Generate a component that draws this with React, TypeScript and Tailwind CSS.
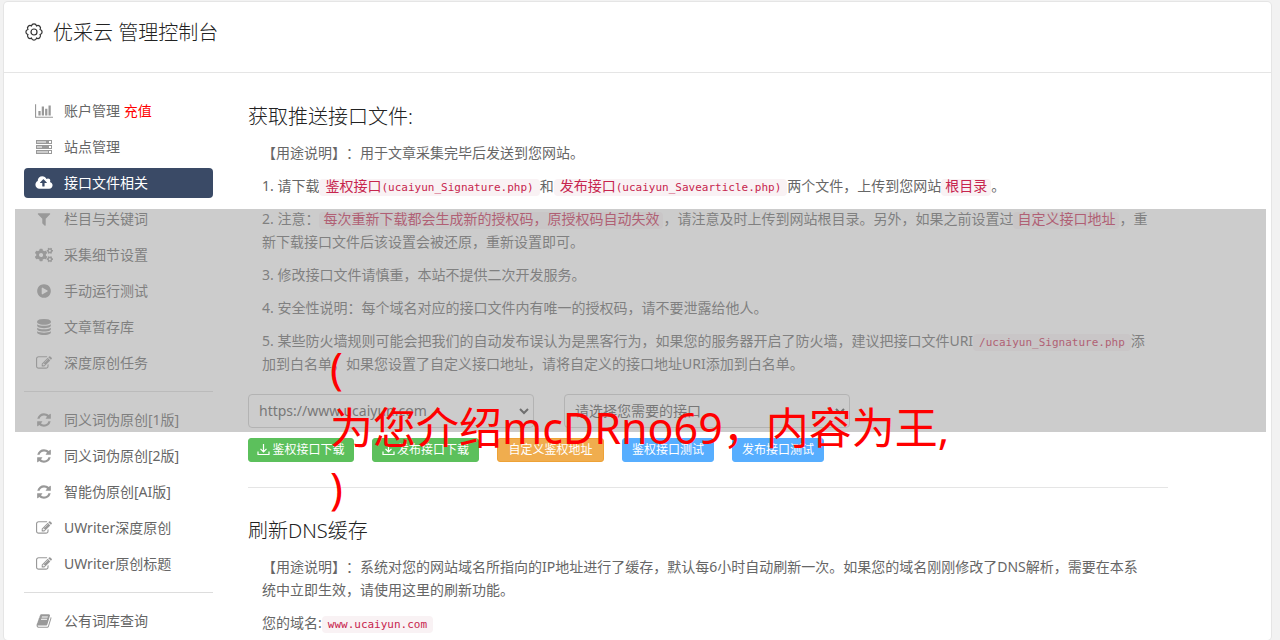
import { FaCogs } from "react-icons/fa";
import type { ReactNode } from "react";

const BODY = "font-['Noto_Sans','Noto_Sans_CJK_SC',sans-serif] [text-spacing-trim:space-all]";

function Glyph({ d, box = "0 0 1792 1792", wide = false }: { d: string; box?: string; wide?: boolean }) {
  return (
    <svg aria-hidden="true" viewBox={box} fill="currentColor" fillRule="evenodd" className={wide ? "h-4 w-[18px]" : "h-4 w-4"}>
      <path d={d} />
    </svg>
  );
}

const PATHS = {
  chart: "M640 896v512h-256v-512h256zM1024 384v1024h-256v-1024h256zM2048 1536v128h-2048v-1536h128v1408h1920zM1408 640v768h-256v-768h256zM1792 256v1152h-256v-1152h256z",
  server:
    "M0 112h1792v448h-1792zM112 280v112h1008v-112zM1456 224v224h224v-224zM0 672h1792v448h-1792zM112 840v112h560v-112zM1456 784v224h224v-224zM0 1232h1792v448h-1792zM112 1400v112h1232v-112zM1456 1344v224h224v-224z",
  cloud:
    "M1280 864q0-14-9-23l-352-352q-9-9-23-9t-23 9l-351 351q-10 12-10 24 0 14 9 23t23 9h224v352q0 13 9.5 22.5t22.5 9.5h192q13 0 22.5-9.5t9.5-22.5v-352h224q13 0 22.5-9.5t9.5-22.5zm640 288q0 159-112.5 271.5t-271.5 112.5h-1088q-185 0-316.5-131.5t-131.5-316.5q0-130 70-240t188-165q-2-30-2-43 0-212 150-362t362-150q156 0 285.5 87t188.5 231q71-62 166-62 106 0 181 75t75 181q0 76-41 138 130 31 213.5 135.5t83.5 238.5z",
  filter:
    "M1595 295q17 41-14 70l-493 493v742q0 42-39 59-13 5-25 5-27 0-45-19l-256-256q-19-19-19-45v-486l-493-493q-31-29-14-70 17-39 59-39h1280q42 0 59 39z",
  play: "M896 128q209 0 385.5 103t279.5 279.5 103 385.5-103 385.5-279.5 279.5-385.5 103-385.5-103-279.5-279.5-103-385.5 103-385.5 279.5-279.5 385.5-103zm384 823q32-18 32-55t-32-55l-544-320q-31-19-64-1-32 19-32 56v640q0 37 32 56 16 8 32 8 17 0 32-9z",
  database:
    "M896 768q237 0 443-43t325-127v170q0 69-103 128t-280 93.5-385 34.5-385-34.5-280-93.5-103-128v-170q119 84 325 127t443 43zm0 768q237 0 443-43t325-127v170q0 69-103 128t-280 93.5-385 34.5-385-34.5-280-93.5-103-128v-170q119 84 325 127t443 43zm0-384q237 0 443-43t325-127v170q0 69-103 128t-280 93.5-385 34.5-385-34.5-280-93.5-103-128v-170q119 84 325 127t443 43zm0-1152q208 0 385 34.5t280 93.5 103 128v128q0 69-103 128t-280 93.5-385 34.5-385-34.5-280-93.5-103-128v-128q0-69 103-128t280-93.5 385-34.5z",
  edit: "M888 1184l116-116-152-152-116 116v56h96v96h56zm440-720q-16-16-33 1l-350 350q-17 17-1 33t33-1l350-350q17-17 1-33zm80 594v190q0 119-84.5 203.5t-203.5 84.5h-832q-119 0-203.5-84.5t-84.5-203.5v-832q0-119 84.5-203.5t203.5-84.5h832q63 0 117 25 15 7 18 23 3 17-9 29l-49 49q-14 14-32 8-23-6-45-6h-832q-66 0-113 47t-47 113v832q0 66 47 113t113 47h832q66 0 113-47t47-113v-126q0-13 9-22l64-64q15-15 35-7t20 29zm-96-738l288 288-672 672h-288v-288zm444 132l-92 92-288-288 92-92q28-28 68-28t68 28l152 152q28 28 28 68t-28 68z",
  refresh:
    "M1639 1056q0 5-1 7-64 268-268 434.5t-478 166.5q-146 0-282.5-55t-243.5-157l-129 129q-19 19-45 19t-45-19-19-45v-448q0-26 19-45t45-19h448q26 0 45 19t19 45-19 45l-137 137q71 66 161 102t187 36q134 0 250-65t186-179q11-17 53-117 8-23 30-23h192q13 0 22.5 9.5t9.5 22.5zm25-800v448q0 26-19 45t-45 19h-448q-26 0-45-19t-19-45 19-45l138-138q-148-137-349-137-134 0-250 65t-186 179q-11 17-53 117-8 23-30 23h-199q-13 0-22.5-9.5t-9.5-22.5v-7q65-268 270-434.5t480-166.5q146 0 284 55.5t245 156.5l130-129q19-19 45-19t45 19 19 45z",
  book: "M1703 478q40 57 18 129l-275 906q-19 64-76.5 107.5t-122.5 43.5h-923q-77 0-148.5-53.5t-99.5-131.5q-24-67-2-127 0-4 3-27t4-37q1-8-3-21.5t-3-19.5q2-11 8-21t16.5-23.5 16.5-23.5q23-38 45-91.5t30-91.5q3-10 .5-30t-.5-28q3-11 17-28t17-23q21-36 42-92t25-90q1-9-2.5-32t.5-28q4-13 22-30.5t22-22.5q19-26 42.5-84.5t27.5-96.5q1-8-3-25.5t-2-26.5q2-8 9-18t18-23 17-21q8-12 16.5-30.5t15-35 16-36 19.5-32 26.5-23.5 36-11.5 47.5 5.5l-1 3q38-9 51-9h761q74 0 114 56t18 130l-274 906q-36 119-71.5 153.5t-128.5 34.5h-869q-27 0-38 15-11 16-1 43 24 70 144 70h923q29 0 56-15.5t35-41.5l300-987q7-22 5-57 38 15 59 43zm-1064 2q-4 13 2 22.5t20 9.5h608q13 0 25.5-9.5t16.5-22.5l21-64q4-13-2-22.5t-20-9.5h-608q-13 0-25.5 9.5t-16.5 22.5zm-83 256q-4 13 2 22.5t20 9.5h608q13 0 25.5-9.5t16.5-22.5l21-64q4-13-2-22.5t-20-9.5h-608q-13 0-25.5 9.5t-16.5 22.5z",
};

type Item = { label: string; icon: ReactNode; extra?: string; active?: boolean };

const refresh = <Glyph d={PATHS.refresh} />;
const edit = <Glyph d={PATHS.edit} />;

const GROUPS: Item[][] = [
  [
    { label: "账户管理", extra: "充值", icon: <Glyph d={PATHS.chart} box="0 0 2048 1792" wide /> },
    { label: "站点管理", icon: <Glyph d={PATHS.server} /> },
    { label: "接口文件相关", active: true, icon: <Glyph d={PATHS.cloud} box="0 0 1920 1792" wide /> },
    { label: "栏目与关键词", icon: <Glyph d={PATHS.filter} /> },
    { label: "采集细节设置", icon: <FaCogs className="h-4 w-[18px]" /> },
    { label: "手动运行测试", icon: <Glyph d={PATHS.play} /> },
    { label: "文章暂存库", icon: <Glyph d={PATHS.database} /> },
    { label: "深度原创任务", icon: edit },
  ],
  [
    { label: "同义词伪原创[1版]", icon: refresh },
    { label: "同义词伪原创[2版]", icon: refresh },
    { label: "智能伪原创[AI版]", icon: refresh },
    { label: "UWriter深度原创", icon: edit },
    { label: "UWriter原创标题", icon: edit },
  ],
  [{ label: "公有词库查询", icon: <Glyph d={PATHS.book} /> }],
];

function NavItem({ item }: { item: Item }) {
  return (
    <li>
      <a
        href="#"
        className={
          item.active
            ? "flex h-[30px] items-center rounded bg-[#3a4a66] pl-[10px] text-white"
            : "flex h-[30px] items-center rounded pl-[10px] text-[#666]"
        }
      >
        <span className={item.active ? "flex w-5 justify-center" : "flex w-5 justify-center text-[#999]"}>{item.icon}</span>
        <span className="ml-[10px]">
          {item.label}
          {item.extra && <span className="text-[#f00]"> {item.extra}</span>}
        </span>
      </a>
    </li>
  );
}

const CODE = "rounded bg-[#f9f2f4] py-[2px] font-['DejaVu_Sans_Mono','Noto_Sans_CJK_SC',monospace] text-[11px] leading-none text-[#c7254e]";

function Code({ cjk, latin }: { cjk?: string; latin?: string }) {
  return (
    <code className={latin ? `${CODE} px-[6px]` : `${CODE} px-1`}>
      {cjk && <span className="text-sm leading-none">{cjk}</span>}
      {latin}
    </code>
  );
}

function DownloadIcon() {
  return (
    <svg aria-hidden="true" viewBox="0 0 13 12" className="mr-[2px] h-3 w-[13px]" fill="none" stroke="currentColor" strokeWidth="1.2">
      <path d="M1 7.500v3h11v-3M6.500 0v7.500M3.500 4.800l3 3l3-3" />
    </svg>
  );
}

function Picker({ id, label, text }: { id: string; label: string; text: string }) {
  return (
    <div className="relative w-[286px]">
      <label htmlFor={id} className="sr-only">
        {label}
      </label>
      <select id={id} className="h-[34px] w-full appearance-none rounded border border-[#ccc] bg-white pr-6 pl-[10px] text-sm text-[#555]">
        <option>{text}</option>
      </select>
      <svg aria-hidden="true" viewBox="0 0 10 7" className="pointer-events-none absolute top-[14px] right-[5px] h-[7px] w-[10px]" fill="none" stroke="#444" strokeWidth="2">
        <path d="M1 1l4 4l4-4" />
      </svg>
    </div>
  );
}

const BTN = "flex h-6 items-center justify-center rounded-[3px] border text-xs text-white";

export default function App() {
  return (
    <div className={`${BODY} relative h-screen overflow-hidden bg-[#f2f2f2] pt-[2px] pr-[9px] pl-1 text-sm text-[#666]`}>
      <div className="min-h-full rounded bg-white shadow-[0_0_0_1px_#e5e5e5]">
        <header className="flex h-[71px] items-start border-b border-[#e5e5e5] pt-[17px] pl-[21px]">
          <svg aria-hidden="true" viewBox="0 0 18 18" className="mt-1 h-[18px] w-[18px]" fill="none" stroke="#333" strokeWidth="1.2">
            <path d="M15.100 6.470a2.600 2.600 0 0 1 0 5.060a2.600 2.600 0 0 1-3.570 3.570a2.600 2.600 0 0 1-5.060 0a2.600 2.600 0 0 1-3.570-3.570a2.600 2.600 0 0 1 0-5.060a2.600 2.600 0 0 1 3.570-3.570a2.600 2.600 0 0 1 5.060 0a2.600 2.600 0 0 1 3.570 3.570z" />
            <circle cx="9" cy="9" r="3" />
          </svg>
          <h1 className="ml-[10px] text-xl leading-7 font-light text-[#222]">优采云 管理控制台</h1>
        </header>

        <div className="flex items-start px-5 pt-[23px]">
          <nav className="w-[189px] shrink-0">
            {GROUPS.map((group, i) => (
              <ul key={i} className={i > 0 ? "mt-[13px] flex flex-col gap-[6px] border-t border-[#ddd] pt-[13px]" : "flex flex-col gap-[6px]"}>
                {group.map((item) => (
                  <NavItem key={item.label} item={item} />
                ))}
              </ul>
            ))}
          </nav>

          <main className="mr-[83px] ml-[35px] flex-1">
            <section className="border-b border-[#e5e5e5] pb-[25px]">
              <h2 className="pt-[7px] text-xl leading-7 font-light text-[#222]">获取推送接口文件:</h2>
              <div className="mt-[10px] flex flex-col gap-[10px] pr-[18px] pl-[14px] leading-[23px]">
                <p>【用途说明】：用于文章采集完毕后发送到您网站。</p>
                <p>
                  1. 请下载
                  <Code cjk="鉴权接口" latin="(ucaiyun_Signature.php)" />和<Code cjk="发布接口" latin="(ucaiyun_Savearticle.php)" />
                  两个文件，上传到您网站
                  <Code cjk="根目录" />。
                </p>
                <p>
                  2. 注意：
                  <Code cjk="每次重新下载都会生成新的授权码，原授权码自动失效" />
                  ，请注意及时上传到网站根目录。另外，如果之前设置过
                  <Code cjk="自定义接口地址" />
                  ，重新下载接口文件后该设置会被还原，重新设置即可。
                </p>
                <p>3. 修改接口文件请慎重，本站不提供二次开发服务。</p>
                <p>4. 安全性说明：每个域名对应的接口文件内有唯一的授权码，请不要泄露给他人。</p>
                <p>
                  5. 某些防火墙规则可能会把我们的自动发布误认为是黑客行为，如果您的服务器开启了防火墙，建议把接口文件URI
                  <Code latin="/ucaiyun_Signature.php" />
                  添加到白名单，如果您设置了自定义接口地址，请将自定义的接口地址URI添加到白名单。
                </p>
              </div>
              <div className="mt-[19px] flex gap-[30px]">
                <Picker id="site" label="站点" text="https://www.ucaiyun.com" />
                <Picker id="api" label="接口" text="请选择您需要的接口" />
              </div>
              <div className="mt-[10px] flex gap-[18px]">
                <button type="button" className={`${BTN} w-[106px] border-[#5cc05c] bg-[#5cc05c]`}>
                  <DownloadIcon />
                  鉴权接口下载
                </button>
                <button type="button" className={`${BTN} w-[107px] border-[#5cc05c] bg-[#5cc05c]`}>
                  <DownloadIcon />
                  发布接口下载
                </button>
                <button type="button" className={`${BTN} w-[107px] border-[#eea236] bg-[#f0ad4e]`}>
                  自定义鉴权地址
                </button>
                <button type="button" className={`${BTN} w-[92px] border-[#57aeff] bg-[#57aeff]`}>
                  鉴权接口测试
                </button>
                <button type="button" className={`${BTN} w-[92px] border-[#57aeff] bg-[#57aeff]`}>
                  发布接口测试
                </button>
              </div>
            </section>

            <section className="pt-[29px]">
              <h2 className="text-xl leading-7 font-light text-[#222]">刷新DNS缓存</h2>
              <div className="mt-[10px] flex flex-col gap-[10px] pr-[18px] pl-[14px] leading-[23px]">
                <p>
                  【用途说明】：系统对您的网站域名所指向的IP地址进行了缓存，默认每6小时自动刷新一次。如果您的域名刚刚修改了DNS解析，需要在本系统中立即生效，请使用这里的刷新功能。
                </p>
                <p>
                  您的域名:
                  <Code latin="www.ucaiyun.com" />
                </p>
              </div>
            </section>
          </main>
        </div>
      </div>

      <div className="absolute top-[209px] right-[14px] left-[15px] h-[223px] bg-[#999]/50" />
      <p className="absolute top-[338px] left-[330px] text-[43px] leading-[60px] whitespace-nowrap text-[#f00]">
        (<br />
        为您介绍mcDRno69，内容为王,
        <br />)
      </p>
    </div>
  );
}
